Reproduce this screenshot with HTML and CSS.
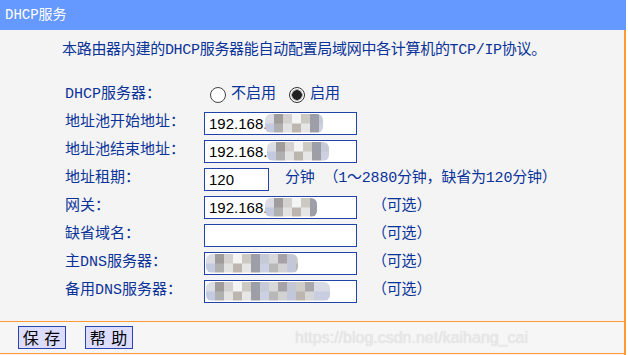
FILE: index.html
```html
<!DOCTYPE html>
<html lang="zh-CN">
<head>
    <meta charset="UTF-8">
    <meta name="viewport" content="width=device-width, initial-scale=1.0">
    <title>DHCP服务</title>
    <link rel="stylesheet" href="styles.css">
</head>
<body>
    <div class="frame">
        <div class="title">DHCP服务</div>
        <div class="content">
            <p class="intro">本路由器内建的DHCP服务器能自动配置局域网中各计算机的TCP/IP协议。</p>

            <div class="form">
                <div class="row">
                    <div class="label">DHCP服务器：</div>
                    <label class="radio"><input type="radio" name="dhcp"> 不启用</label>
                    <label class="radio"><input type="radio" name="dhcp" checked> 启用</label>
                </div>
                <div class="row">
                    <div class="label">地址池开始地址：</div>
                    <div class="field">
                        <input type="text" value="192.168.">
                        <span class="mosaic m1"></span>
                    </div>
                </div>
                <div class="row">
                    <div class="label">地址池结束地址：</div>
                    <div class="field">
                        <input type="text" value="192.168.">
                        <span class="mosaic m2"></span>
                    </div>
                </div>
                <div class="row">
                    <div class="label">地址租期：</div>
                    <div class="field short">
                        <input type="text" value="120">
                    </div>
                    <span class="note lease">分钟 （1～2880分钟，缺省为120分钟）</span>
                </div>
                <div class="row">
                    <div class="label">网关：</div>
                    <div class="field">
                        <input type="text" value="192.168.">
                        <span class="mosaic m3"></span>
                    </div>
                    <span class="note">（可选）</span>
                </div>
                <div class="row">
                    <div class="label">缺省域名：</div>
                    <div class="field">
                        <input type="text" value="">
                    </div>
                    <span class="note">（可选）</span>
                </div>
                <div class="row">
                    <div class="label">主DNS服务器：</div>
                    <div class="field">
                        <input type="text" value="">
                        <span class="mosaic m4"></span>
                    </div>
                    <span class="note">（可选）</span>
                </div>
                <div class="row">
                    <div class="label">备用DNS服务器：</div>
                    <div class="field">
                        <input type="text" value="">
                        <span class="mosaic m5"></span>
                    </div>
                    <span class="note">（可选）</span>
                </div>
            </div>

            <div class="actions">
                <button class="btn">保 存</button>
                <button class="btn">帮 助</button>
                <span class="watermark">https://blog.csdn.net/kaihang_cai</span>
            </div>
        </div>
    </div>
</body>
</html>
```

FILE: styles.css
```css
body {
    margin: 0;
    padding: 0;
    background-color: #fff;
    font-family: "Liberation Mono", "Noto Sans CJK SC", monospace;
}

.frame {
    width: 626px;
    background-color: #f4f4f4;
}

.title {
    height: 30px;
    line-height: 30px;
    padding-left: 5px;
    background-color: #6699ff;
    color: #fff;
    font-size: 14px;
}

.content {
    border-right: 2px solid #ff9933;
    padding-bottom: 2px;
}

.intro {
    margin: 0;
    padding: 12px 0 0 62px;
    height: 18px;
    line-height: 18px;
    font-size: 15px;
    letter-spacing: -0.3px;
    color: #0a3399;
    margin-bottom: 21px;
}

.form {
    padding-left: 65px;
}

.row {
    display: flex;
    align-items: center;
    height: 28px;
    font-size: 15px;
    color: #0a3399;
}

.label {
    width: 139px;
    line-height: 18px;
}

.radio {
    display: flex;
    align-items: center;
    gap: 5px;
    line-height: 18px;
    margin-left: 6px;
    margin-right: 7px;
}

.radio input {
    appearance: none;
    margin: 0;
    width: 16px;
    height: 16px;
    border: 1px solid #444;
    border-radius: 50%;
    background-color: #fff;
    box-sizing: border-box;
}

.radio input:checked {
    background: radial-gradient(circle, #222 0 4.5px, #aaa 5px 5.5px, #fff 6px);
    border: 1.5px solid #333;
}

.field {
    position: relative;
    width: 153px;
    height: 23px;
}

.field.short {
    width: 65px;
}

.field input {
    width: 100%;
    height: 100%;
    box-sizing: border-box;
    margin: 0;
    padding: 1px 4px 0;
    border: 1px solid #2244aa;
    background-color: #fff;
    font-family: "Liberation Sans", Arial, sans-serif;
    font-size: 15px;
    color: #000;
    outline: none;
}

.note {
    margin-left: 15px;
    line-height: 18px;
    letter-spacing: -0.2px;
}

.note.lease {
    margin-left: 16px;
}

/* blurred parts of the addresses */
.mosaic {
    position: absolute;
    top: 2px;
    height: 19px;
    border-radius: 6px;
    filter: blur(0.6px);
    background:
        linear-gradient(90deg, #dcdce4 0 9px, #a09c9c 9px 18px, #d4d0d0 18px 27px, #f4f4f4 27px 36px, #ccc8c2 36px 45px, #9c9ea8 45px 54px, #c6cad6 54px 63px, #d8d8d8 63px 72px, #a6a2a8 72px 81px, #c4c8d4 81px 90px, #d0ccc8 90px 99px, #a8a8ac 99px 108px, #d8dae4 108px) top / 100% 50% no-repeat,
        linear-gradient(90deg, #c4cae0 0 9px, #b0b0b0 9px 18px, #e2e2e2 18px 27px, #bcb6ae 27px 36px, #e6e6e6 36px 45px, #9e9ea6 45px 54px, #ccd0e0 54px 63px, #b8b8b8 63px 72px, #d2d2d2 72px 81px, #c2c8da 81px 90px, #bdb6b0 90px 99px, #d6d6d6 99px 108px, #c8cee0 108px) bottom / 100% 50% no-repeat;
}

.m1 { left: 61px; width: 58px; }
.m2 { left: 63px; width: 62px; }
.m3 { left: 61px; width: 52px; }
.m4 { left: 2px; width: 92px; }
.m5 { left: 2px; width: 124px; }

.actions {
    display: flex;
    align-items: center;
    margin-top: 16px;
    height: 31px;
    padding-left: 18px;
    border-top: 1px solid #ff9933;
    border-bottom: 1px solid #ff9933;
    background-color: #f6f6f6;
}

.btn {
    width: 48px;
    height: 23px;
    margin: 0 19px 0 0;
    padding: 0;
    border: 1px solid #2a44b0;
    background-color: #dcdcff;
    font-family: "Noto Sans CJK SC", sans-serif;
    font-size: 16px;
    line-height: 19px;
    letter-spacing: 1px;
    color: #000;
}

.watermark {
    margin-left: 143px;
    font-family: "Liberation Sans", Arial, sans-serif;
    font-size: 16px;
    color: #e8e8e8;
    text-shadow: 0 0 1px #d6d6d6;
}
```
